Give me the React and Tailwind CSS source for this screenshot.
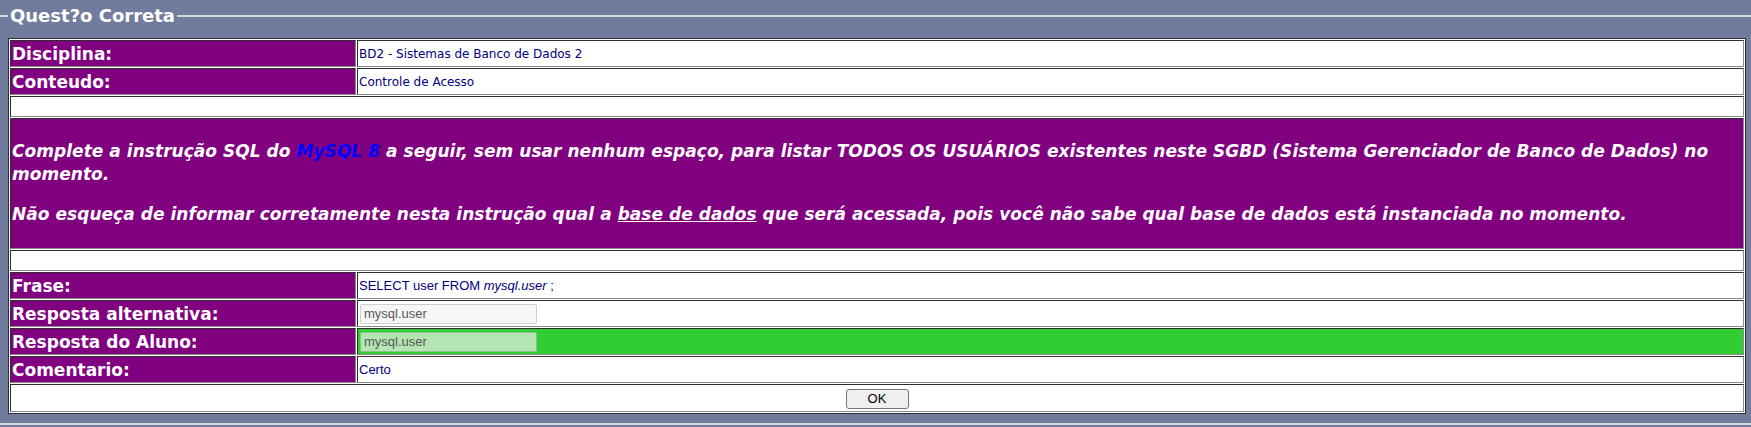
import React from "react";

const labelCell =
  "w-[346px] h-[27px] bg-[#800080] border border-t-[#2e2e2e] border-l-[#2e2e2e] border-b-[#8a8a8a] border-r-[#8a8a8a] px-[1px] text-white font-bold text-[17px] leading-[20px] align-middle";
const valueCell =
  "h-[27px] border border-t-[#2e2e2e] border-l-[#2e2e2e] border-b-[#8a8a8a] border-r-[#8a8a8a] px-[1px] align-middle text-[#000080]";
const plainCell =
  "border border-t-[#2e2e2e] border-l-[#2e2e2e] border-b-[#8a8a8a] border-r-[#8a8a8a] p-[1px] bg-white";

const App = () => {
  return (
    <div className="w-full h-[427px] bg-[#717b9d] overflow-hidden font-['DejaVu_Sans',sans-serif]">
      {/* fieldset top edge with legend */}
      <div className="flex items-center h-[32px]">
        <div className="w-[8px] h-[2px] bg-[#d4d6de]"></div>
        <span className="px-[2px] text-white font-bold text-[18px] leading-[22px]">Quest?o Correta</span>
        <div className="flex-1 h-[2px] bg-[#d4d6de]"></div>
      </div>

      <div className="mt-[6px] ml-[8px]">
        <table className="w-[1738px] border-separate border-spacing-[1px] border border-[#2e2e2e] bg-white">
          <tbody>
            <tr>
              <td className={labelCell}>Disciplina:</td>
              <td className={valueCell + " bg-white text-[12px]"}>BD2 - Sistemas de Banco de Dados 2</td>
            </tr>
            <tr>
              <td className={labelCell}>Conteudo:</td>
              <td className={valueCell + " bg-white text-[12px]"}>Controle de Acesso</td>
            </tr>
            <tr>
              <td colSpan={2} className={plainCell + " h-[21px]"}></td>
            </tr>
            <tr>
              <td
                colSpan={2}
                className="h-[131px] bg-[#800080] border border-t-[#2e2e2e] border-l-[#2e2e2e] border-b-[#8a8a8a] border-r-[#8a8a8a] px-[1px] pt-[21px] align-top text-white font-bold italic text-[17px] leading-[23px] tracking-[0.04px]"
              >
                <p className="mb-[17px]">
                  Complete a instrução SQL do <span className="text-[#0000ff]">MySQL 8</span> a seguir, sem usar nenhum
                  espaço, para listar TODOS OS USUÁRIOS existentes neste SGBD (Sistema Gerenciador de Banco de Dados) no
                  momento.
                </p>
                <p>
                  Não esqueça de informar corretamente nesta instrução qual a <span className="underline">base de dados</span>{" "}
                  que será acessada, pois você não sabe qual base de dados está instanciada no momento.
                </p>
              </td>
            </tr>
            <tr>
              <td colSpan={2} className={plainCell + " h-[21px]"}></td>
            </tr>
            <tr>
              <td className={labelCell}>Frase:</td>
              <td className={valueCell + " bg-white font-['Liberation_Sans',sans-serif] text-[13px]"}>
                SELECT user FROM <i>mysql.user</i> ;
              </td>
            </tr>
            <tr>
              <td className={labelCell}>Resposta alternativa:</td>
              <td className={valueCell + " bg-white"}>
                <input
                  readOnly
                  value="mysql.user"
                  className="ml-[1px] w-[177px] h-[20px] px-[3px] block bg-[#f6f6f6] border border-[#cfcfcf] rounded-[2px] text-[13px] text-[#555] font-['Liberation_Sans',sans-serif] outline-none"
                />
              </td>
            </tr>
            <tr>
              <td className={labelCell}>Resposta do Aluno:</td>
              <td className={valueCell + " bg-[#32cd32]"}>
                <input
                  readOnly
                  value="mysql.user"
                  className="ml-[1px] w-[177px] h-[20px] px-[3px] block bg-[#b4e6b4] border border-[#8fbf8f] rounded-[2px] text-[13px] text-[#555] font-['Liberation_Sans',sans-serif] outline-none"
                />
              </td>
            </tr>
            <tr>
              <td className={labelCell}>Comentario:</td>
              <td className={valueCell + " bg-white font-['Liberation_Sans',sans-serif] text-[13px]"}>Certo</td>
            </tr>
            <tr>
              <td colSpan={2} className={plainCell + " h-[27px] text-center align-middle"}>
                <button className="w-[63px] h-[20px] bg-[#efefef] border border-[#767676] rounded-[3px] text-[13px] leading-[18px] text-black font-['Liberation_Sans',sans-serif]">
                  OK
                </button>
              </td>
            </tr>
          </tbody>
        </table>
      </div>

      {/* fieldset bottom edge */}
      <div className="mt-[9px] h-[2px] bg-[#d4d6de]"></div>
    </div>
  );
};

export default App;
